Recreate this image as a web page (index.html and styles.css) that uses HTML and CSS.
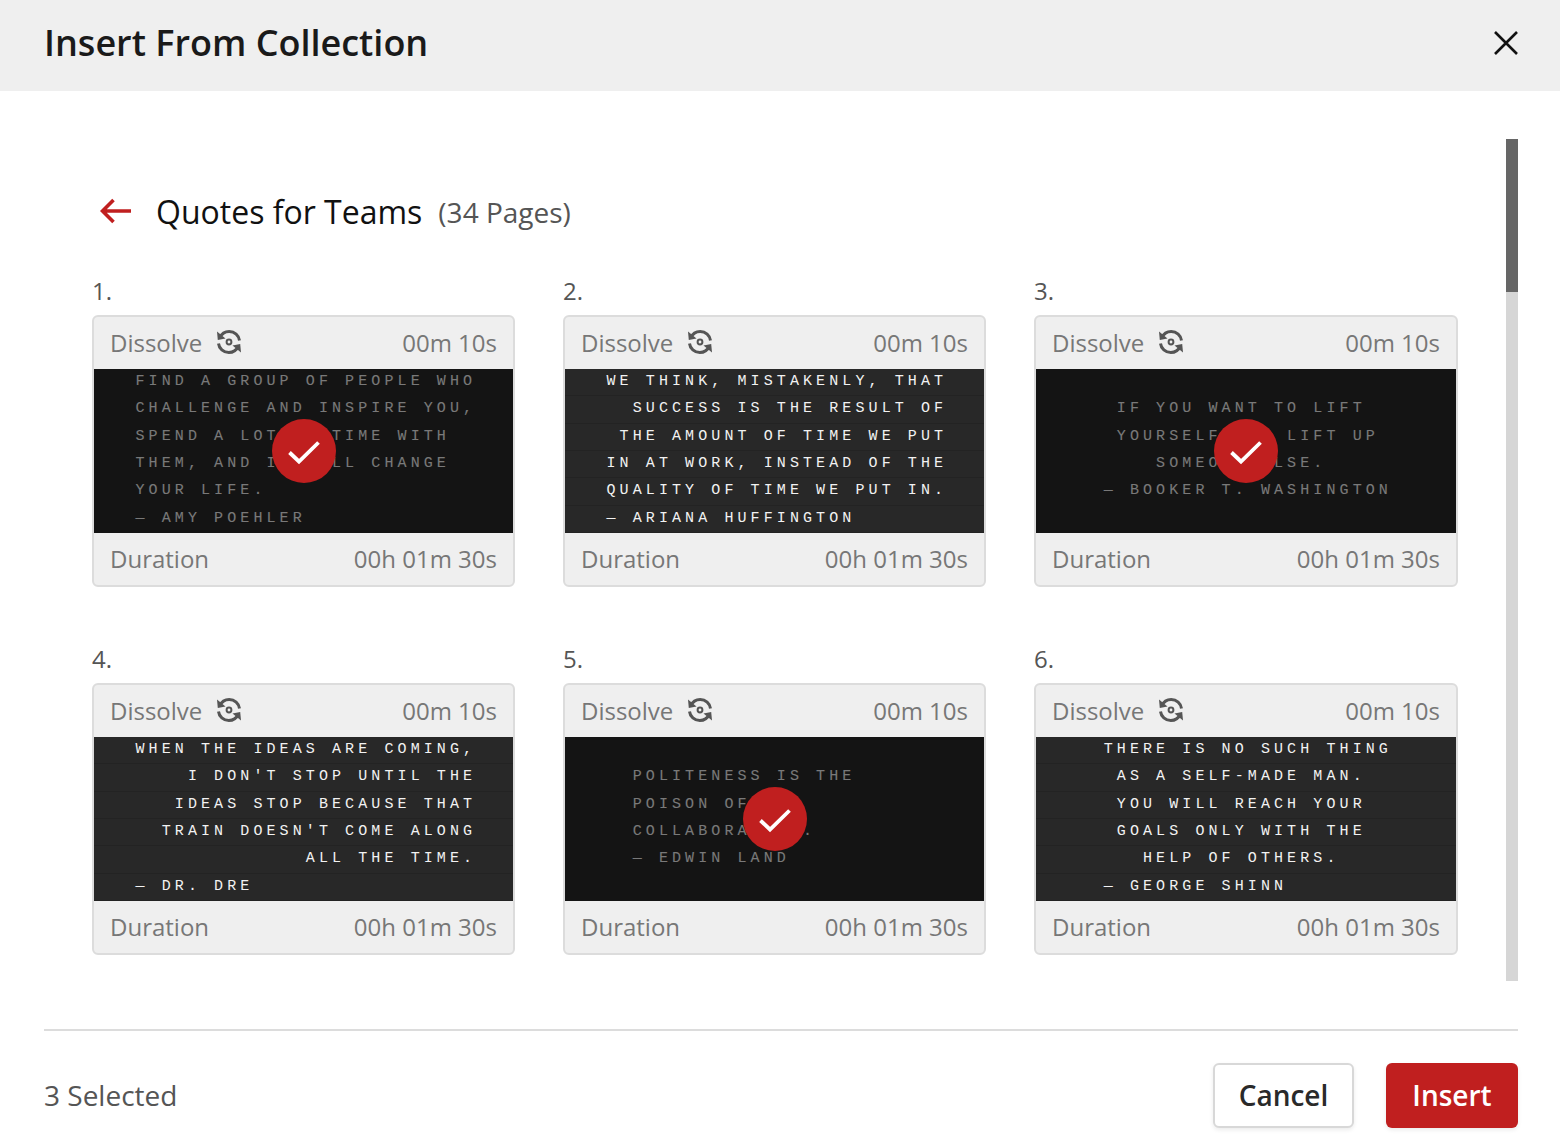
FILE: index.html
```html
<!DOCTYPE html>
<html lang="en">
<head>
<meta charset="utf-8">
<title>Insert From Collection</title>
<link rel="stylesheet" href="styles.css">
</head>
<body>
<svg class="sprite" width="0" height="0" aria-hidden="true">
  <symbol id="cycle" viewBox="0 0 26 26">
    <path d="M3.5 9C5.5 4.8 9 2.5 13.200 2.500c5.400 0 9.700 3.900 10.300 9" fill="none" stroke="currentColor" stroke-width="3"/>
    <path d="M22.500 17c-2 4.200-5.500 6.500-9.700 6.500-5.400 0-9.700-3.900-10.300-9" fill="none" stroke="currentColor" stroke-width="3"/>
    <path d="M1 2.500 1.800 11 9.500 9.500Z" fill="currentColor"/>
    <path d="M25 23.500 24.200 15 16.500 16.500Z" fill="currentColor"/>
    <circle cx="13" cy="13" r="2.400" fill="none" stroke="currentColor" stroke-width="2"/>
  </symbol>
  <symbol id="check" viewBox="0 0 32 32">
    <path d="M1.500 17.500 11 26.500 30.500 7.500" fill="none" stroke="currentColor" stroke-width="3.800"/>
  </symbol>
</svg>
<div class="modal">
  <header class="head">
    <h1 class="head-title">Insert From Collection</h1>
    <button class="close" aria-label="Close">
      <svg width="26" height="26" viewBox="0 0 26 26"><path d="M2 2 24 24M24 2 2 24" stroke="#111" stroke-width="2.600" fill="none"/></svg>
    </button>
  </header>
  <main class="body">
    <div class="content">
      <div class="crumb">
        <svg class="back" width="32" height="26" viewBox="0 0 32 26"><path d="M31 13H3M13.500 2 2.500 13 13.500 24" stroke="#c01f1f" stroke-width="3.600" fill="none"/></svg>
        <h2 class="crumb-title">Quotes for Teams</h2>
        <span class="crumb-count">(34 Pages)</span>
      </div>
      <div class="grid">
        <section class="item">
          <div class="num">1.</div>
          <div class="card">
            <div class="row"><span class="trans">Dissolve<svg class="cyc"><use href="#cycle"/></svg></span><span>00m 10s</span></div>
            <div class="thumb sel"><pre class="quote">FIND A GROUP OF PEOPLE WHO
CHALLENGE AND INSPIRE YOU,
SPEND A LOT OF TIME WITH
THEM, AND IT WILL CHANGE
YOUR LIFE.
— AMY POEHLER</pre><div class="shade"><span class="tick"><svg width="32" height="32"><use href="#check"/></svg></span></div></div>
            <div class="row"><span>Duration</span><span>00h 01m 30s</span></div>
          </div>
        </section>
        <section class="item">
          <div class="num">2.</div>
          <div class="card">
            <div class="row"><span class="trans">Dissolve<svg class="cyc"><use href="#cycle"/></svg></span><span>00m 10s</span></div>
            <div class="thumb"><pre class="quote">WE THINK, MISTAKENLY, THAT
  SUCCESS IS THE RESULT OF
 THE AMOUNT OF TIME WE PUT
IN AT WORK, INSTEAD OF THE
QUALITY OF TIME WE PUT IN.
— ARIANA HUFFINGTON</pre></div>
            <div class="row"><span>Duration</span><span>00h 01m 30s</span></div>
          </div>
        </section>
        <section class="item">
          <div class="num">3.</div>
          <div class="card">
            <div class="row"><span class="trans">Dissolve<svg class="cyc"><use href="#cycle"/></svg></span><span>00m 10s</span></div>
            <div class="thumb sel"><pre class="quote">

   IF YOU WANT TO LIFT
   YOURSELF UP, LIFT UP
      SOMEONE ELSE.
  — BOOKER T. WASHINGTON</pre><div class="shade"><span class="tick"><svg width="32" height="32"><use href="#check"/></svg></span></div></div>
            <div class="row"><span>Duration</span><span>00h 01m 30s</span></div>
          </div>
        </section>
        <section class="item">
          <div class="num">4.</div>
          <div class="card">
            <div class="row"><span class="trans">Dissolve<svg class="cyc"><use href="#cycle"/></svg></span><span>00m 10s</span></div>
            <div class="thumb"><pre class="quote">WHEN THE IDEAS ARE COMING,
    I DON'T STOP UNTIL THE
   IDEAS STOP BECAUSE THAT
  TRAIN DOESN'T COME ALONG
             ALL THE TIME.
— DR. DRE</pre></div>
            <div class="row"><span>Duration</span><span>00h 01m 30s</span></div>
          </div>
        </section>
        <section class="item">
          <div class="num">5.</div>
          <div class="card">
            <div class="row"><span class="trans">Dissolve<svg class="cyc"><use href="#cycle"/></svg></span><span>00m 10s</span></div>
            <div class="thumb sel"><pre class="quote">

  POLITENESS IS THE
  POISON OF
  COLLABORATION.
  — EDWIN LAND</pre><div class="shade"><span class="tick"><svg width="32" height="32"><use href="#check"/></svg></span></div></div>
            <div class="row"><span>Duration</span><span>00h 01m 30s</span></div>
          </div>
        </section>
        <section class="item">
          <div class="num">6.</div>
          <div class="card">
            <div class="row"><span class="trans">Dissolve<svg class="cyc"><use href="#cycle"/></svg></span><span>00m 10s</span></div>
            <div class="thumb"><pre class="quote">  THERE IS NO SUCH THING
   AS A SELF-MADE MAN.
   YOU WILL REACH YOUR
   GOALS ONLY WITH THE
     HELP OF OTHERS.
  — GEORGE SHINN</pre></div>
            <div class="row"><span>Duration</span><span>00h 01m 30s</span></div>
          </div>
        </section>
      </div>
    </div>
    <div class="track"><div class="thumb-bar"></div></div>
  </main>
  <footer class="foot">
    <span class="selected">3 Selected</span>
    <div class="actions">
      <button class="btn btn-ghost">Cancel</button>
      <button class="btn btn-red">Insert</button>
    </div>
  </footer>
</div>
</body>
</html>
```
FILE: styles.css
```css
* { box-sizing: border-box; }
html, body { margin: 0; height: 100%; }
body { background: #fff; font-family: "Open Sans", "Liberation Sans", sans-serif; color: #111; overflow: hidden; }
.sprite { position: absolute; }
.modal { height: 1148px; display: flex; flex-direction: column; }
.head { height: 91px; flex: none; background: #efefef; display: flex; align-items: center; justify-content: space-between; padding: 0 41px 5px 44px; }
.head-title { margin: 0 0 2px; font-size: 36px; font-weight: 600; color: #1a1a1a; }
.close { border: 0; background: none; padding: 0; display: flex; }
.body { height: 938px; flex: none; display: flex; align-items: flex-start; justify-content: space-between; padding: 48px 42px 0 92px; }
.content { width: 1366px; padding-top: 48px; }
.crumb { display: flex; align-items: center; height: 48px; }
.crumb-title { margin: 0 0 0 24px; font-size: 32px; font-weight: 400; color: #111; }
.back { margin-left: 8px; flex: none; }
.crumb-count { margin: 2px 0 0 16px; font-size: 28px; color: #555; }
.grid { display: grid; grid-template-columns: 423px 423px 424px; column-gap: 48px; row-gap: 55px; margin-top: 39px; }
.num { font-size: 24px; line-height: 34px; height: 41px; color: #555; }
.card { height: 272px; border: 2px solid #dcdcdc; border-radius: 6px; background: #efefef; overflow: hidden; display: flex; flex-direction: column; justify-content: space-between; }
.row { flex: 1; display: flex; align-items: center; justify-content: space-between; padding: 0 16px 2px; font-size: 24px; color: #777; }
.trans { display: flex; align-items: center; }
.cyc { width: 26px; height: 26px; margin-left: 14px; color: #555; }
.thumb { position: relative; height: 164px; flex: none; margin: 0; overflow: hidden; background: repeating-linear-gradient(#282828 0, #282828 26.33px, #232323 26.33px, #232323 27.33px); }
.quote { margin: -1px 0 0; padding-left: 41.5px; font-family: "Liberation Mono", "DejaVu Sans Mono", monospace; font-size: 15px; line-height: 27.33px; letter-spacing: 4.1px; color: #f2f2f2; white-space: pre; }
.shade { position: absolute; inset: 0; background: rgba(0,0,0,.5); display: flex; align-items: center; justify-content: center; }
.sel { background: #282828; }
.tick { width: 64px; height: 64px; border-radius: 50%; background: #c01f1f; color: #fff; display: flex; align-items: center; justify-content: center; }
.tick svg { display: block; }
.track { width: 12px; height: 842px; background: #d6d6d6; flex: none; }
.thumb-bar { height: 153px; background: #666; }
.foot { flex: 1; margin: 0 42px 0 44px; border-top: 2px solid #dcdcdc; display: flex; align-items: flex-start; justify-content: space-between; padding-top: 32px; }
.selected { font-size: 28px; line-height: 64px; color: #555; }
.actions { display: flex; gap: 32px; }
.btn { height: 65px; border-radius: 6px; font-family: inherit; font-size: 28px; font-weight: 600; padding: 0 0 2px; box-shadow: 0 2px 4px rgba(0,0,0,.08); }
.btn-ghost { width: 141px; background: #fff; border: 2px solid #d8d8d8; color: #2a2a2a; }
.btn-red { width: 132px; background: #c01f1f; border: 0; color: #fff; }
```
